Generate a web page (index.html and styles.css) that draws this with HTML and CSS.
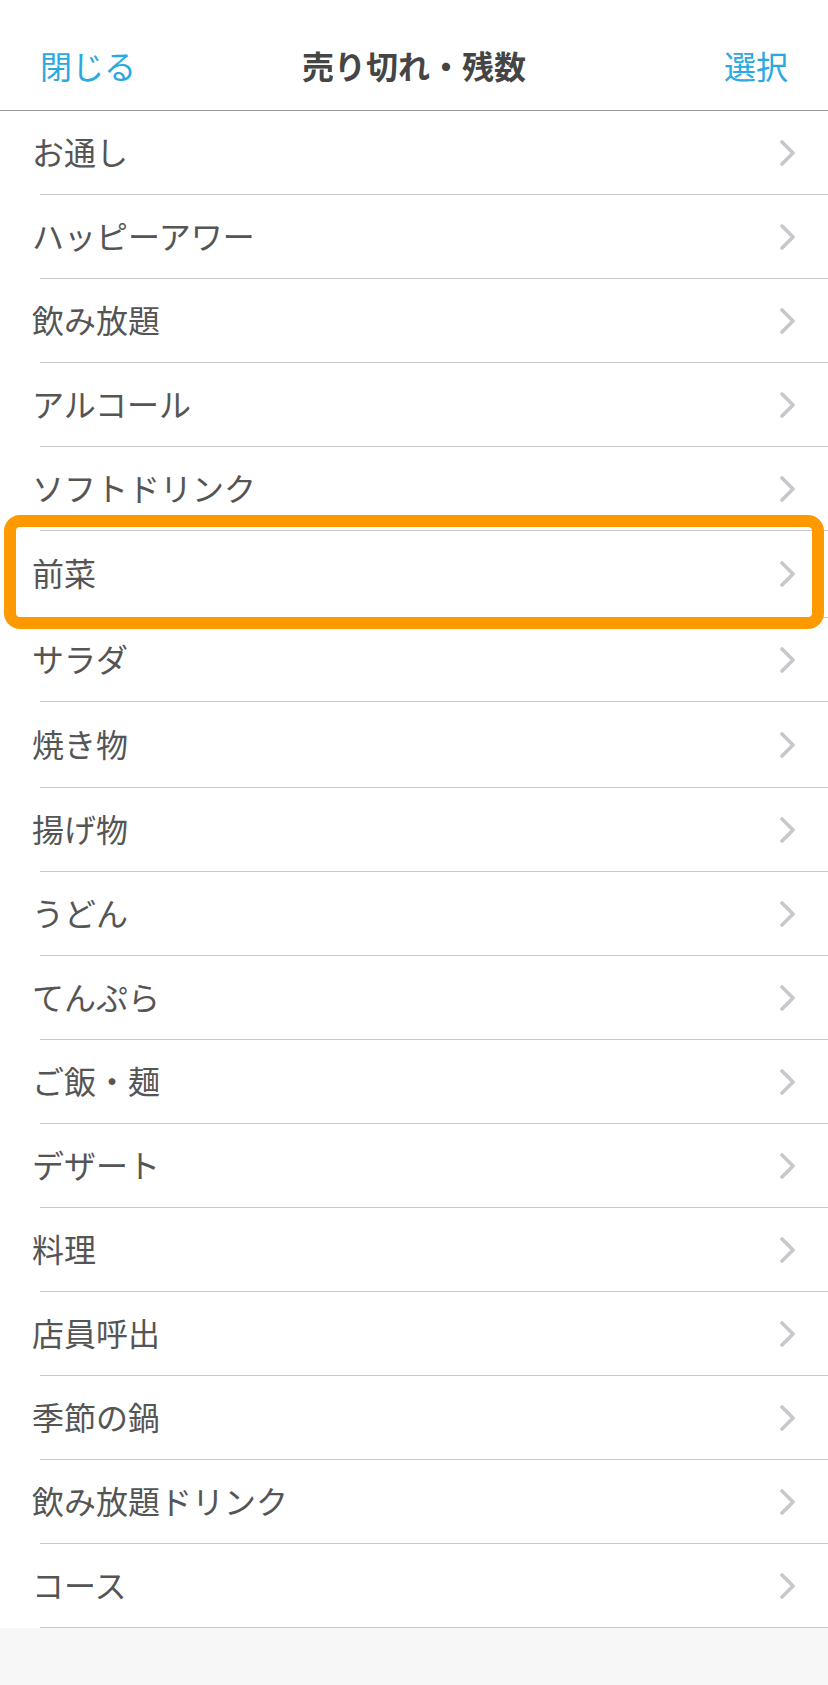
FILE: index.html
```html
<!DOCTYPE html>
<html lang="ja">
<head>
<meta charset="utf-8">
<title>売り切れ・残数</title>
<link rel="stylesheet" href="styles.css">
</head>
<body>
<div class="screen">
  <header class="navbar">
    <span class="nav-btn nav-left">閉じる</span>
    <span class="nav-title">売り切れ・残数</span>
    <span class="nav-btn nav-right">選択</span>
  </header>
  <div class="list-wrap">
    <ul class="list">
      <li class="row"><span class="label">お通し</span><svg class="chev" viewBox="0 0 17 26"><polyline points="3,2 14,13 3,24"/></svg></li>
      <li class="row"><span class="label">ハッピーアワー</span><svg class="chev" viewBox="0 0 17 26"><polyline points="3,2 14,13 3,24"/></svg></li>
      <li class="row"><span class="label">飲み放題</span><svg class="chev" viewBox="0 0 17 26"><polyline points="3,2 14,13 3,24"/></svg></li>
      <li class="row"><span class="label">アルコール</span><svg class="chev" viewBox="0 0 17 26"><polyline points="3,2 14,13 3,24"/></svg></li>
      <li class="row"><span class="label">ソフトドリンク</span><svg class="chev" viewBox="0 0 17 26"><polyline points="3,2 14,13 3,24"/></svg></li>
      <li class="row row-tall"><span class="label">前菜</span><svg class="chev" viewBox="0 0 17 26"><polyline points="3,2 14,13 3,24"/></svg></li>
      <li class="row"><span class="label">サラダ</span><svg class="chev" viewBox="0 0 17 26"><polyline points="3,2 14,13 3,24"/></svg></li>
      <li class="row row-mid"><span class="label">焼き物</span><svg class="chev" viewBox="0 0 17 26"><polyline points="3,2 14,13 3,24"/></svg></li>
      <li class="row"><span class="label">揚げ物</span><svg class="chev" viewBox="0 0 17 26"><polyline points="3,2 14,13 3,24"/></svg></li>
      <li class="row"><span class="label">うどん</span><svg class="chev" viewBox="0 0 17 26"><polyline points="3,2 14,13 3,24"/></svg></li>
      <li class="row"><span class="label">てんぷら</span><svg class="chev" viewBox="0 0 17 26"><polyline points="3,2 14,13 3,24"/></svg></li>
      <li class="row"><span class="label">ご飯・麺</span><svg class="chev" viewBox="0 0 17 26"><polyline points="3,2 14,13 3,24"/></svg></li>
      <li class="row"><span class="label">デザート</span><svg class="chev" viewBox="0 0 17 26"><polyline points="3,2 14,13 3,24"/></svg></li>
      <li class="row"><span class="label">料理</span><svg class="chev" viewBox="0 0 17 26"><polyline points="3,2 14,13 3,24"/></svg></li>
      <li class="row"><span class="label">店員呼出</span><svg class="chev" viewBox="0 0 17 26"><polyline points="3,2 14,13 3,24"/></svg></li>
      <li class="row"><span class="label">季節の鍋</span><svg class="chev" viewBox="0 0 17 26"><polyline points="3,2 14,13 3,24"/></svg></li>
      <li class="row"><span class="label">飲み放題ドリンク</span><svg class="chev" viewBox="0 0 17 26"><polyline points="3,2 14,13 3,24"/></svg></li>
      <li class="row"><span class="label">コース</span><svg class="chev" viewBox="0 0 17 26"><polyline points="3,2 14,13 3,24"/></svg></li>
    </ul>
    <div class="highlight"></div>
  </div>
</div>
</body>
</html>
```

FILE: styles.css
```css
html, body {
  margin: 0;
  padding: 0;
}

body {
  background: #f7f7f7;
  font-family: "Noto Sans CJK JP", "Noto Sans", sans-serif;
}

.screen {
  width: 828px;
  min-height: 1685px;
  background: #f7f7f7;
}

.navbar {
  height: 90px;
  padding: 20px 40px 0 40px;
  display: grid;
  grid-template-columns: 1fr auto 1fr;
  align-items: center;
  background: #ffffff;
  border-bottom: 1px solid #9a9a9a;
}

.nav-btn {
  font-size: 32px;
  color: #2aa9e1;
  line-height: 1;
}

.nav-left {
  justify-self: start;
}

.nav-right {
  justify-self: end;
}

.nav-title {
  font-size: 32px;
  font-weight: 700;
  color: #454545;
  line-height: 1;
}

.list-wrap {
  position: relative;
  background: #ffffff;
}

.list {
  list-style: none;
  margin: 0;
  padding: 0;
}

.row {
  height: 83px;
  margin-left: 40px;
  padding-right: 32px;
  display: flex;
  align-items: center;
  justify-content: space-between;
  border-bottom: 1px solid #c8c8cc;
  box-sizing: content-box;
}

.row-tall {
  height: 86px;
}

.row-mid {
  height: 85px;
}

.label {
  margin-left: -8px;
  margin-bottom: 4px;
  font-size: 32px;
  color: #555555;
  line-height: 1;
}

.chev {
  width: 17px;
  height: 26px;
  fill: none;
  stroke: #c7c7cc;
  stroke-width: 3.6;
  stroke-linecap: round;
  stroke-linejoin: round;
}

.highlight {
  position: absolute;
  left: 4px;
  top: 404px;
  width: 820px;
  height: 114px;
  box-sizing: border-box;
  border: 12px solid #ff9900;
  border-radius: 16px;
  pointer-events: none;
}
```
